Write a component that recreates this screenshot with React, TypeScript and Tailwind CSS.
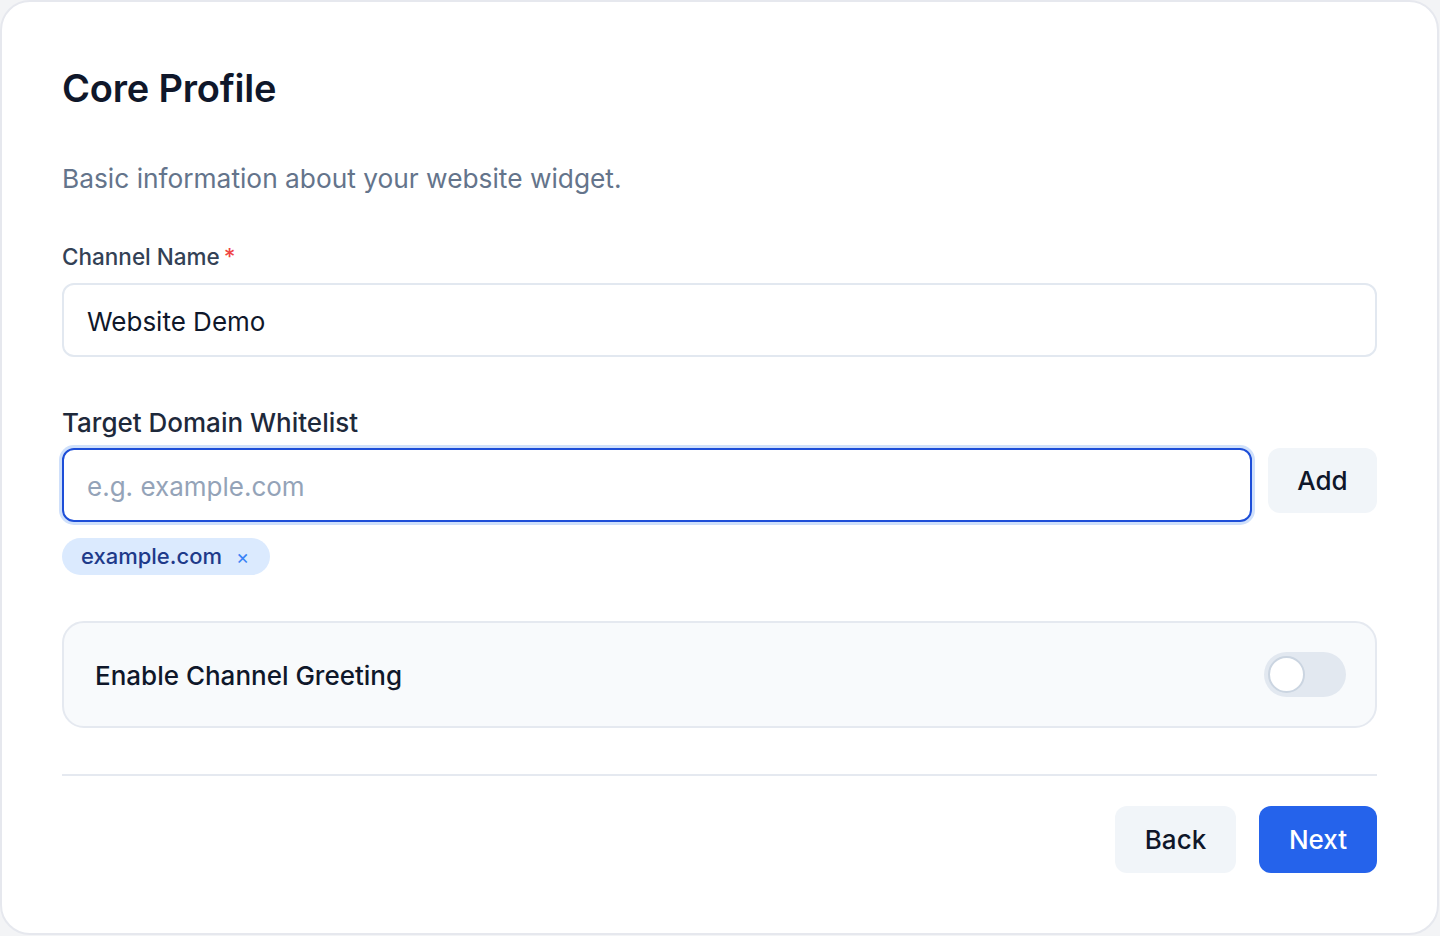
import React from "react";

export default function App() {
  return (
    <div
      className="w-[1440px] h-[936px] bg-[#f3f4f6]"
      style={{ fontFamily: "Inter, 'Noto Sans', sans-serif" }}
    >
      <div className="w-[1439px] h-[935px] bg-white border-2 border-[#e6e8ee] rounded-[30px] pt-[64px] px-[60px] flex flex-col">
        <h1 className="text-[38px] leading-[45px] font-semibold text-[#0f172a] tracking-[-0.2px]">
          Core Profile
        </h1>
        <p className="mt-[52px] text-[26.3px] leading-[32px] text-[#64748b]">
          Basic information about your website widget.
        </p>

        <label className="mt-[48px] text-[22.5px] leading-[28px] font-medium text-[#334155] flex">
          Channel Name<span className="text-[#ef4444] ml-[4px]">*</span>
        </label>
        <div className="mt-[12px] h-[74px] w-full border-2 border-[#e2e8f0] rounded-[12px] flex items-center px-[23px] pt-[3px]">
          <input
            readOnly
            value="Website Demo"
            className="w-full bg-transparent outline-none text-[26px] text-[#0f172a]"
          />
        </div>

        <label className="mt-[51px] text-[26px] leading-[30px] font-medium text-[#1e293b]">
          Target Domain Whitelist
        </label>
        <div className="mt-[10px] flex items-start gap-4">
          <div className="flex-1 h-[74px] border-2 border-[#1d4ed8] ring-[3px] ring-[#cfe0fb] rounded-[12px] flex items-center px-[23px] pt-[3px]">
            <input
              readOnly
              placeholder="e.g. example.com"
              className="w-full bg-transparent outline-none text-[26px] text-[#0f172a] placeholder:text-[#94a3b8]"
            />
          </div>
          <button className="h-[65px] w-[109px] rounded-[12px] bg-[#f1f5f9] text-[26px] font-medium text-[#0f172a] flex items-center justify-center">
            Add
          </button>
        </div>

        <div className="mt-[16px] flex">
          <span className="h-[37px] rounded-full bg-[#dbeafe] pl-[19px] pr-[21px] flex items-center gap-[14px]">
            <span className="text-[22px] font-medium text-[#1e3a8a]">example.com</span>
            <span className="text-[#3b82f6] text-[20px] leading-none">×</span>
          </span>
        </div>

        <div className="mt-[46px] h-[107px] w-full rounded-[22px] border-2 border-[#e5e9f0] bg-[#f8fafc] flex items-center justify-between pl-[31px] pr-[29px]">
          <span className="text-[26px] font-medium text-[#0f172a] pt-[1px]">Enable Channel Greeting</span>
          <div className="w-[82px] h-[45px] rounded-full bg-[#e2e8f0] flex items-center px-[4px]">
            <div className="w-[37px] h-[37px] rounded-full bg-white border-2 border-[#cbd5e1]" />
          </div>
        </div>

        <div className="mt-[46px] border-t-2 border-[#e5e9f0]" />

        <div className="mt-[30px] flex justify-end gap-[23px]">
          <button className="h-[67px] w-[121px] rounded-[12px] bg-[#f1f5f9] text-[26px] font-medium text-[#0f172a] flex items-center justify-center">
            Back
          </button>
          <button className="h-[67px] w-[118px] rounded-[12px] bg-[#2563eb] text-[26px] font-medium text-white flex items-center justify-center">
            Next
          </button>
        </div>
      </div>
    </div>
  );
}
